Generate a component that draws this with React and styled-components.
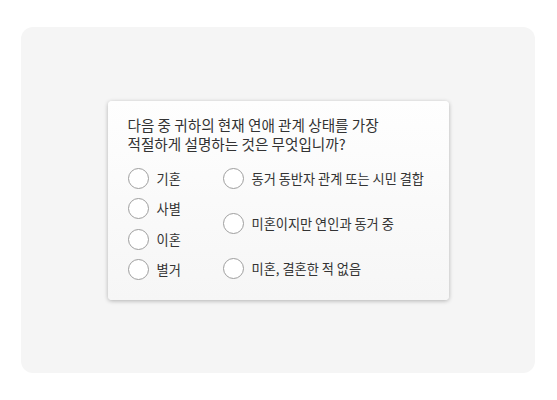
import React from "react";
import styled, { createGlobalStyle } from "styled-components";

const GlobalStyle = createGlobalStyle`
  body {
    margin: 0;
    background: #ffffff;
    font-family: "Noto Sans CJK KR", "Noto Sans", sans-serif;
  }
`;

const Page = styled.div`
  padding: 27px 22px 27px 21px;
`;

const Panel = styled.div`
  height: 346px;
  background: #f5f5f5;
  border-radius: 12px;
  display: flex;
  align-items: center;
  justify-content: center;
`;

const Card = styled.div`
  box-sizing: border-box;
  width: 341px;
  height: 199px;
  padding: 14px 20px 19px;
  background: linear-gradient(180deg, #fefefe 0%, #f6f6f6 100%);
  border-radius: 4px;
  box-shadow: 0 1px 4px rgba(0, 0, 0, 0.28);
`;

const Question = styled.p`
  margin: 0 0 15px;
  font-size: 14.6px;
  line-height: 19px;
  color: #333;
`;

const Options = styled.div`
  display: grid;
  grid-template-columns: 95px auto;
  height: 113px;
`;

const Column = styled.div`
  display: flex;
  flex-direction: column;
  justify-content: space-between;
  padding-bottom: ${(p) => p.$tail || 0}px;
`;

const Option = styled.label`
  display: flex;
  align-items: center;
  gap: 8px;
  height: 21px;
  font-size: 13.2px;
  color: #333;
`;

const Circle = styled.span`
  box-sizing: border-box;
  width: 21px;
  height: 21px;
  flex: none;
  border-radius: 50%;
  border: 1px solid #9e9e9e;
  background: #fff;
`;

const left = ["기혼", "사별", "이혼", "별거"];
const right = ["동거 동반자 관계 또는 시민 결합", "미혼이지만 연인과 동거 중", "미혼, 결혼한 적 없음"];

export default function App() {
  return (
    <Page>
      <GlobalStyle />
      <Panel>
        <Card>
          <Question>
            다음 중 귀하의 현재 연애 관계 상태를 가장
            <br />
            적절하게 설명하는 것은 무엇입니까?
          </Question>
          <Options>
            <Column>
              {left.map((t) => (
                <Option key={t}>
                  <Circle />
                  {t}
                </Option>
              ))}
            </Column>
            <Column $tail={2}>
              {right.map((t) => (
                <Option key={t}>
                  <Circle />
                  {t}
                </Option>
              ))}
            </Column>
          </Options>
        </Card>
      </Panel>
    </Page>
  );
}
